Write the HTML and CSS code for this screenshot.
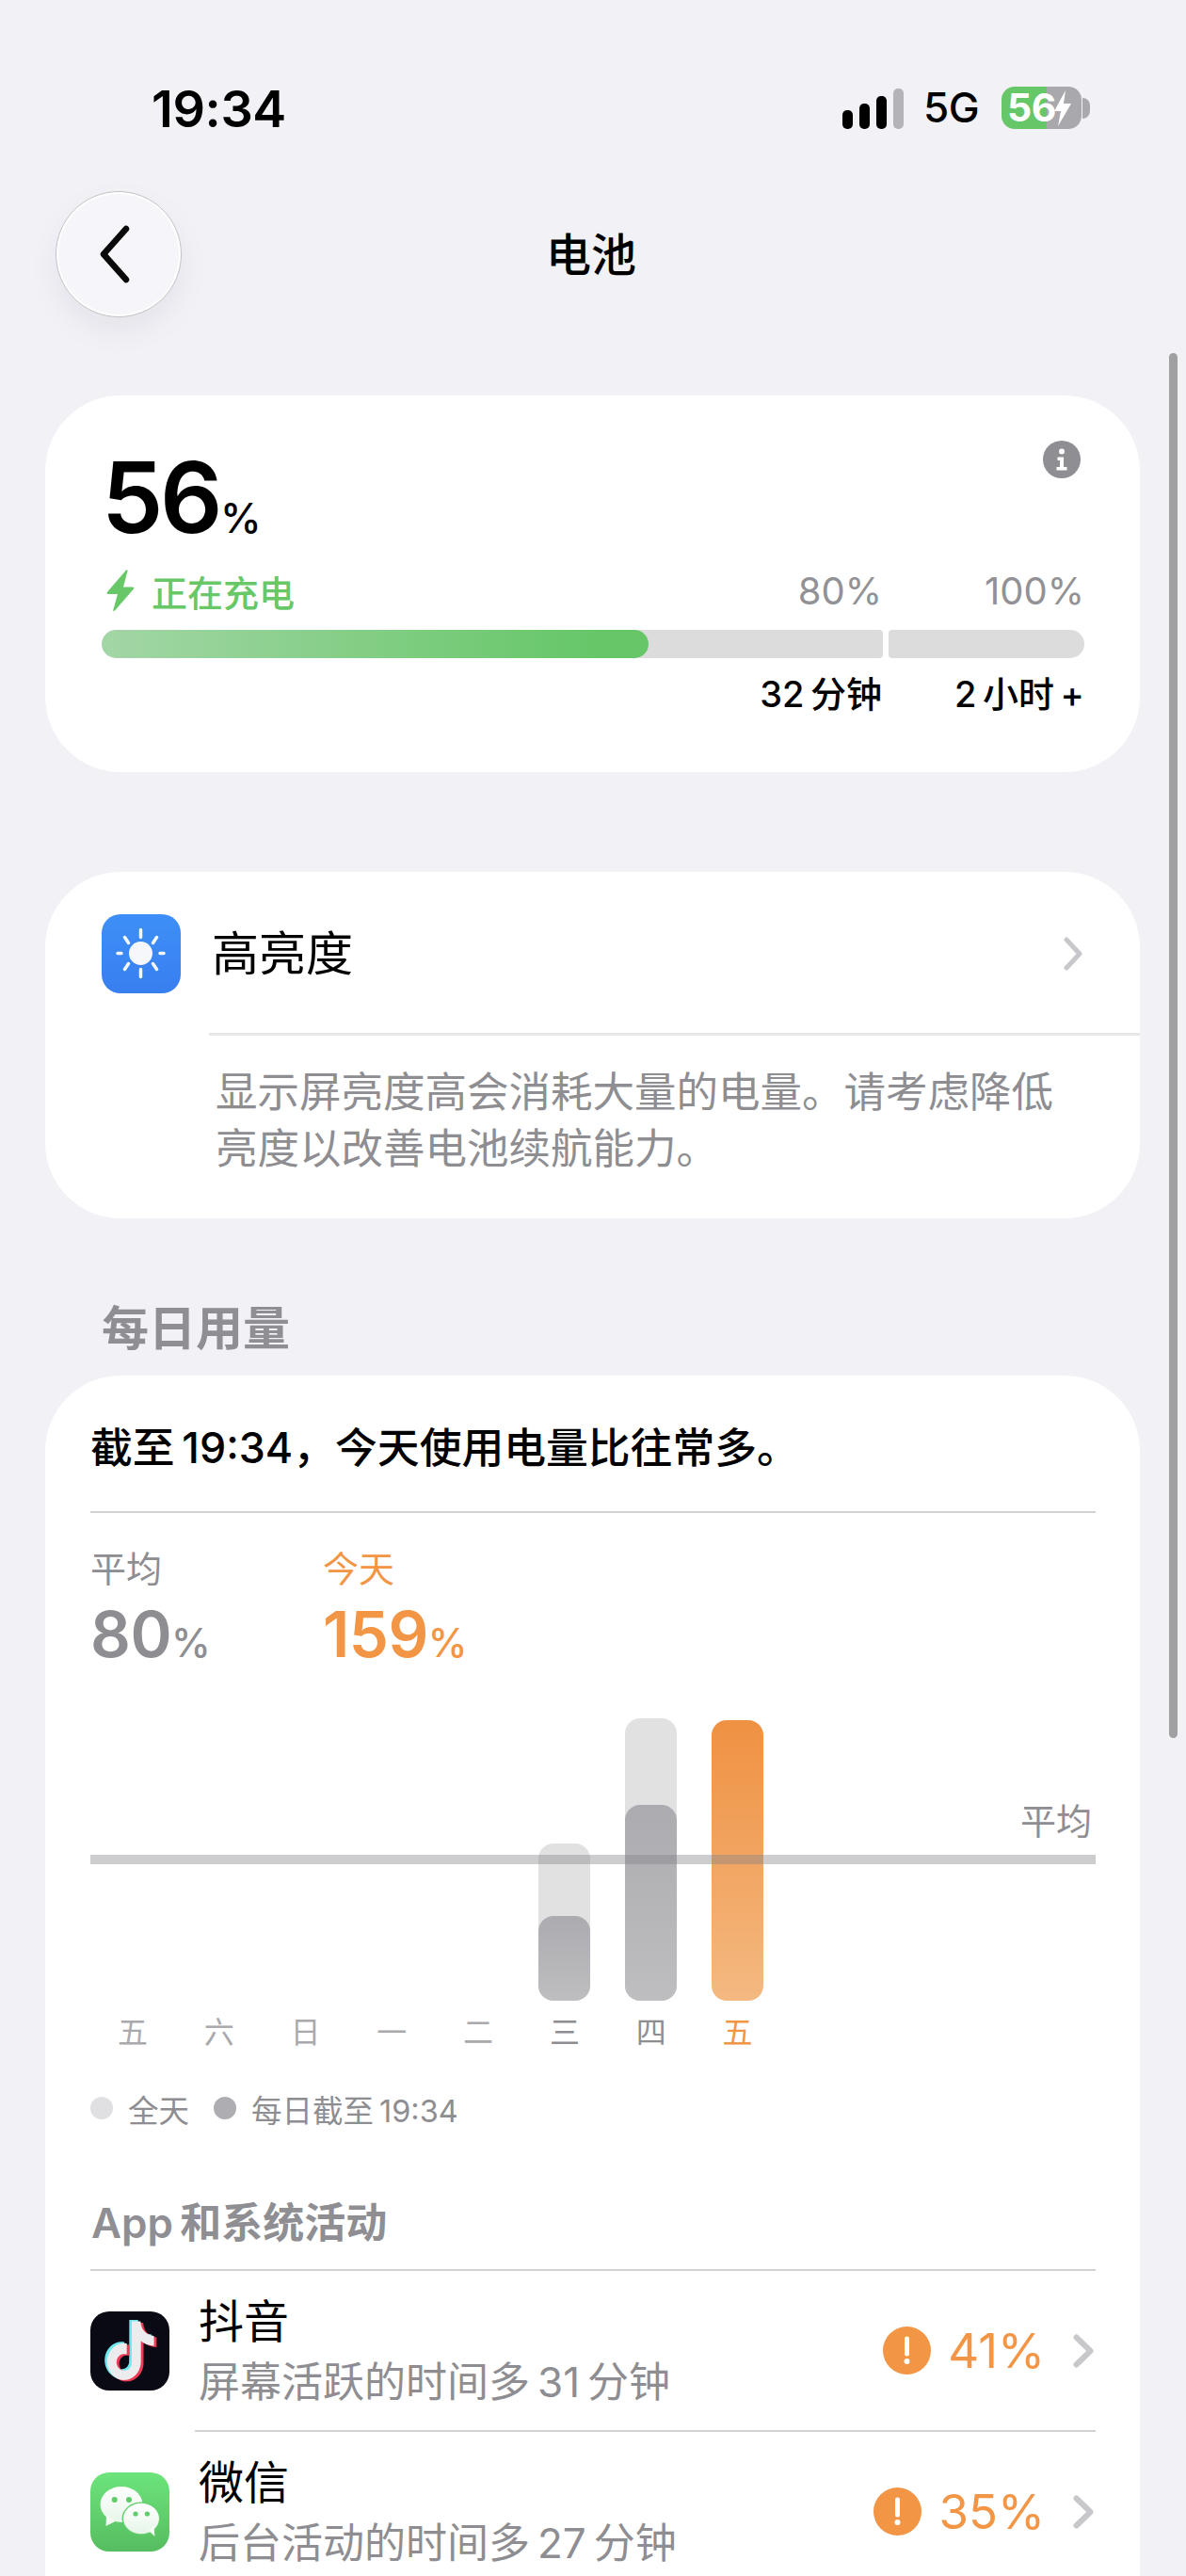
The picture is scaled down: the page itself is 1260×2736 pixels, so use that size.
FILE: index.html
```html
<!DOCTYPE html>
<html lang="zh-CN">
<head>
<meta charset="utf-8">
<title>电池</title>
<link rel="stylesheet" href="styles.css">
</head>
<body>
<div class="screen">
  <header class="status-bar">
    <span class="clock">19:34</span>
    <div class="status-right">
      <div class="signal"><i class="s1"></i><i class="s2"></i><i class="s3"></i><i class="s4"></i></div>
      <span class="net">5G</span>
      <div class="battery">
        <div class="battery-body">
          <span class="battery-level">56</span>
          <svg class="battery-bolt" viewBox="0 0 20 40"><path d="M13 1 1 23h7L5 39 19 15h-8z" fill="#fff"/></svg>
        </div>
        <div class="battery-cap"></div>
      </div>
    </div>
  </header>

  <nav class="nav">
    <button class="back" aria-label="返回">
      <svg viewBox="0 0 40 64" width="40" height="64"><path d="M33 5 9 32l24 27" fill="none" stroke="#0a0a0a" stroke-width="6.500" stroke-linecap="round" stroke-linejoin="round"/></svg>
    </button>
    <h1 class="nav-title">电池</h1>
    <span></span>
  </nav>

  <section class="card charge-card">
    <div class="level-row">
      <div class="level"><span class="level-num">56</span><span class="level-pct">%</span></div>
      <svg class="info" viewBox="0 0 40 40" width="40" height="40">
        <circle cx="20" cy="20" r="20" fill="#8e8e93"/>
        <circle cx="20" cy="11.500" r="3" fill="#fff"/>
        <path d="M15.500 17.500h6.500v10.500h3.500v3.500h-11v-3.500h3.500v-7h-2.500z" fill="#fff"/>
      </svg>
    </div>
    <div class="target-row">
      <div class="charging">
        <svg viewBox="0 0 30 46" width="30" height="46"><path d="M21 1.500c.8-.8 1.800 0 1.500 1L18 19.500h10c1.300 0 1.700 1 1 2L9 44.500c-.8 1-2 .2-1.700-.8L12 27H2c-1.300 0-1.800-1.200-1-2.200z" fill="#68c868"/></svg>
        <span>正在充电</span>
      </div>
      <div class="target t80">80%</div>
      <div class="target t100">100%</div>
    </div>
    <div class="charge-bar">
      <div class="seg seg-main"><div class="seg-fill"></div></div>
      <div class="seg seg-rest"></div>
    </div>
    <div class="eta-row">
      <div class="eta t80">32&thinsp;分钟</div>
      <div class="eta t100">2&thinsp;小时&thinsp;+</div>
    </div>
  </section>

  <section class="card insight-card">
    <div class="insight-head">
      <svg class="rounded-icon" viewBox="0 0 84 84" width="84" height="84">
        <defs><linearGradient id="blue" x1="0" y1="0" x2="0" y2="1"><stop offset="0" stop-color="#3d8ff7"/><stop offset="1" stop-color="#387ff0"/></linearGradient></defs>
        <rect width="84" height="84" rx="20" fill="url(#blue)"/>
        <circle cx="41.500" cy="41.500" r="12.500" fill="#f5f7fa"/>
        <g stroke="#f5f7fa" stroke-width="3.500" stroke-linecap="round">
          <path d="M41.500 16.500v8M41.500 58.500v8M17 41.500h4M62 41.500h4"/>
          <path d="M24.500 24.500l4 6M58.500 24.500l-4 6M24.500 58.500l4-6M58.500 58.500l-4-6"/>
        </g>
      </svg>
      <span class="insight-title">高亮度</span>
      <svg class="chev-thin" viewBox="0 0 22 38" width="22" height="38"><path d="M4 4l14 15L4 34" fill="none" stroke="#c8c8cc" stroke-width="5" stroke-linecap="round" stroke-linejoin="round"/></svg>
    </div>
    <div class="insight-rule"></div>
    <p class="insight-text">显示屏亮度高会消耗大量的电量。请考虑降低亮度以改善电池续航能力。</p>
  </section>

  <h2 class="section-title">每日用量</h2>

  <section class="card usage-card">
    <p class="usage-note">截至&thinsp;19:34，今天使用电量比往常多。</p>
    <div class="rule"></div>
    <div class="stats">
      <div class="stat">
        <div class="stat-label">平均</div>
        <div class="stat-value"><b>80</b><small>%</small></div>
      </div>
      <div class="stat stat-today">
        <div class="stat-label">今天</div>
        <div class="stat-value"><b>159</b><small>%</small></div>
      </div>
    </div>

    <div class="chart">
      <div class="avg-line"></div>
      <div class="avg-label">平均</div>
      <div class="day"><div class="plot"></div><span>五</span></div>
      <div class="day"><div class="plot"></div><span>六</span></div>
      <div class="day"><div class="plot"></div><span>日</span></div>
      <div class="day"><div class="plot"></div><span>一</span></div>
      <div class="day"><div class="plot"></div><span>二</span></div>
      <div class="day day-dark"><div class="plot"><div class="bar bar-wed"><div class="bar-part bar-part-wed"></div></div></div><span>三</span></div>
      <div class="day day-dark"><div class="plot"><div class="bar bar-thu"><div class="bar-part bar-part-thu"></div></div></div><span>四</span></div>
      <div class="day day-today"><div class="plot"><div class="bar bar-fri"></div></div><span>五</span></div>
    </div>

    <div class="legend">
      <i class="dot dot-all"></i><span>全天</span>
      <i class="dot dot-part"></i><span>每日截至&thinsp;19:34</span>
    </div>

    <h3 class="apps-title">App&thinsp;和系统活动</h3>
    <div class="rule"></div>

    <div class="app-row">
      <svg class="app-icon" viewBox="0 0 84 84" width="84" height="84">
        <rect width="84" height="84" rx="20" fill="#0a0a14"/>
        <g transform="translate(11.500 9) scale(2.380 2.600)">
          <path fill="#6fe9ee" d="M12.525.02c1.310-.02 2.610-.01 3.910-.02.08 1.530.63 3.090 1.750 4.170 1.120 1.110 2.700 1.620 4.240 1.790v4.030c-1.440-.05-2.890-.35-4.200-.97-.57-.26-1.100-.59-1.620-.93-.01 2.920.01 5.840-.02 8.750-.08 1.400-.54 2.790-1.350 3.940-1.310 1.920-3.580 3.170-5.910 3.210-1.430.08-2.860-.31-4.080-1.030-2.020-1.190-3.440-3.370-3.650-5.710-.02-.5-.03-1-.01-1.490.18-1.900 1.120-3.720 2.580-4.960 1.660-1.440 3.980-2.130 6.150-1.720.02 1.480-.04 2.960-.04 4.440-.99-.32-2.150-.23-3.020.37-.63.41-1.110 1.040-1.360 1.750-.21.510-.15 1.070-.14 1.610.24 1.640 1.820 3.020 3.500 2.870 1.120-.01 2.190-.66 2.770-1.610.19-.33.4-.67.41-1.060.1-1.790.06-3.570.07-5.360.01-4.030-.01-8.050.02-12.070z"/>
        </g>
        <g transform="translate(17 12) scale(2.380 2.600)">
          <path fill="#ee3a55" d="M12.525.02c1.310-.02 2.610-.01 3.910-.02.08 1.530.63 3.090 1.750 4.170 1.120 1.110 2.700 1.620 4.240 1.790v4.030c-1.440-.05-2.890-.35-4.200-.97-.57-.26-1.100-.59-1.620-.93-.01 2.920.01 5.840-.02 8.750-.08 1.400-.54 2.790-1.350 3.940-1.310 1.920-3.580 3.170-5.910 3.210-1.430.08-2.860-.31-4.080-1.030-2.020-1.190-3.440-3.370-3.650-5.710-.02-.5-.03-1-.01-1.490.18-1.900 1.120-3.720 2.580-4.960 1.660-1.440 3.980-2.130 6.150-1.720.02 1.480-.04 2.960-.04 4.440-.99-.32-2.150-.23-3.020.37-.63.41-1.110 1.040-1.360 1.750-.21.510-.15 1.070-.14 1.610.24 1.640 1.820 3.020 3.500 2.870 1.120-.01 2.190-.66 2.770-1.610.19-.33.4-.67.41-1.060.1-1.790.06-3.570.07-5.360.01-4.030-.01-8.050.02-12.070z"/>
        </g>
        <g transform="translate(14.200 10.500) scale(2.380 2.600)">
          <path fill="#ececee" d="M12.525.02c1.310-.02 2.610-.01 3.910-.02.08 1.530.63 3.090 1.750 4.170 1.120 1.110 2.700 1.620 4.240 1.790v4.030c-1.440-.05-2.890-.35-4.200-.97-.57-.26-1.100-.59-1.620-.93-.01 2.920.01 5.840-.02 8.750-.08 1.400-.54 2.790-1.350 3.940-1.310 1.920-3.580 3.170-5.910 3.210-1.430.08-2.860-.31-4.080-1.030-2.020-1.190-3.440-3.370-3.650-5.710-.02-.5-.03-1-.01-1.490.18-1.900 1.120-3.720 2.580-4.960 1.660-1.440 3.980-2.130 6.150-1.720.02 1.480-.04 2.960-.04 4.440-.99-.32-2.150-.23-3.020.37-.63.41-1.110 1.040-1.360 1.750-.21.510-.15 1.070-.14 1.610.24 1.640 1.820 3.020 3.500 2.870 1.120-.01 2.190-.66 2.770-1.610.19-.33.4-.67.41-1.060.1-1.790.06-3.570.07-5.360.01-4.030-.01-8.050.02-12.070z"/>
        </g>
      </svg>
      <div class="app-text">
        <div class="app-name">抖音</div>
        <div class="app-sub">屏幕活跃的时间多&thinsp;31&thinsp;分钟</div>
      </div>
      <svg class="warn" viewBox="0 0 51 51" width="51" height="51"><circle cx="25.500" cy="25.500" r="25.500" fill="#f29545"/><path d="M25.500 13v16" stroke="#fff" stroke-width="5" stroke-linecap="round"/><circle cx="25.500" cy="37" r="3" fill="#fff"/></svg>
      <span class="app-pct">41%</span>
      <svg class="chev" viewBox="0 0 22 36" width="22" height="36"><path d="M3.500 3.500 18.500 18l-15 14.500" fill="none" stroke="#c8c8cc" stroke-width="6" stroke-linecap="round" stroke-linejoin="round"/></svg>
    </div>
    <div class="rule rule-inset"></div>
    <div class="app-row">
      <svg class="app-icon" viewBox="0 0 84 84" width="84" height="84">
        <defs>
          <linearGradient id="wx" x1="0" y1="0" x2="0" y2="1"><stop offset="0" stop-color="#6de47c"/><stop offset="1" stop-color="#56bd60"/></linearGradient>
          <linearGradient id="wb" x1="0" y1="0" x2="0" y2="1"><stop offset="0" stop-color="#ffffff"/><stop offset="1" stop-color="#e6f6e8"/></linearGradient>
        </defs>
        <rect width="84" height="84" rx="20" fill="url(#wx)"/>
        <ellipse cx="33" cy="34" rx="22.500" ry="19" fill="url(#wb)"/>
        <path d="M17 46l-.5 11 10-5z" fill="url(#wb)"/>
        <ellipse cx="54" cy="49" rx="20.500" ry="17.500" fill="#62d06e"/>
        <ellipse cx="54" cy="49" rx="19" ry="16.300" fill="url(#wb)"/>
        <path d="M62 62l6.500 6-1-11z" fill="url(#wb)"/>
        <g fill="#5fcb6b"><circle cx="25.700" cy="29" r="3"/><circle cx="41" cy="29" r="3"/><circle cx="48" cy="44" r="2.600"/><circle cx="60.400" cy="44" r="2.600"/></g>
      </svg>
      <div class="app-text">
        <div class="app-name">微信</div>
        <div class="app-sub">后台活动的时间多&thinsp;27&thinsp;分钟</div>
      </div>
      <svg class="warn" viewBox="0 0 51 51" width="51" height="51"><circle cx="25.500" cy="25.500" r="25.500" fill="#f29545"/><path d="M25.500 13v16" stroke="#fff" stroke-width="5" stroke-linecap="round"/><circle cx="25.500" cy="37" r="3" fill="#fff"/></svg>
      <span class="app-pct">35%</span>
      <svg class="chev" viewBox="0 0 22 36" width="22" height="36"><path d="M3.500 3.500 18.500 18l-15 14.500" fill="none" stroke="#c8c8cc" stroke-width="6" stroke-linecap="round" stroke-linejoin="round"/></svg>
    </div>
  </section>

  <div class="scrollbar"></div>
</div>
</body>
</html>
```

FILE: styles.css
```css
* { box-sizing: border-box; }

html, body { margin: 0; padding: 0; }

body {
  background: #f1f1f6;
  color: #000;
  font-family: "Inter", "Noto Sans CJK SC", sans-serif;
}

.screen {
  position: relative;
  width: 1260px;
  height: 2736px;
  overflow: hidden;
}

/* status bar */
.status-bar {
  display: flex;
  justify-content: space-between;
  align-items: center;
  height: 45px;
  margin-top: 92px;
  padding: 0 102px 0 161px;
}

.clock {
  padding-top: 2px;
  font-size: 54px;
  font-weight: 600;
  line-height: 45px;
  letter-spacing: -0.4px;
}

.status-right {
  display: flex;
  align-items: flex-end;
}

.signal {
  display: flex;
  align-items: flex-end;
  gap: 7px;
  height: 43px;
}

.signal i {
  display: block;
  width: 11px;
  border-radius: 5px;
  background: #000;
}

.signal .s1 { height: 20px; }
.signal .s2 { height: 27px; }
.signal .s3 { height: 35px; }
.signal .s4 { height: 43px; background: #b4b4b8; }

.net {
  margin-left: 21px;
  width: 83px;
  font-size: 44px;
  font-weight: 500;
  line-height: 45px;
  letter-spacing: -0.5px;
}

.battery {
  display: flex;
  align-items: center;
}

.battery-body {
  display: flex;
  align-items: center;
  width: 85px;
  height: 45px;
  padding-left: 6px;
  border-radius: 14px;
  background: linear-gradient(90deg, #66c768 0 48px, #a8a8ad 48px);
}

.battery-level {
  width: 47px;
  color: #fff;
  font-size: 41px;
  font-weight: 700;
  line-height: 45px;
  letter-spacing: -0.5px;
}

.battery-bolt {
  width: 24px;
  height: 40px;
}

.battery-cap {
  width: 8px;
  height: 22px;
  margin-left: 1px;
  border-radius: 0 8px 8px 0;
  background: #a8a8ad;
}

/* navigation */
.nav {
  display: grid;
  grid-template-columns: 1fr auto 1fr;
  align-items: center;
  margin-top: 66px;
  padding: 0 59px;
}

.back {
  display: flex;
  align-items: center;
  justify-content: center;
  width: 134px;
  height: 134px;
  padding: 0 10px 0 0;
  border: 1px solid #c4c4c8;
  border-radius: 50%;
  background: #f6f6fa;
  box-shadow: inset 0 0 0 2px #fff, 0 14px 28px rgba(120, 120, 140, 0.1);
}

.nav-title {
  margin: 2px 0 0 -4px;
  font-size: 48px;
  font-weight: 500;
  line-height: 60px;
}

/* cards */
.card {
  width: 1163px;
  margin-left: 48px;
  border-radius: 80px;
  background: #fff;
}

.charge-card {
  height: 400px;
  margin-top: 83px;
  padding: 48px 59px 0 60px;
}

.level-row {
  display: flex;
  justify-content: space-between;
  align-items: flex-start;
  height: 120px;
}

.level {
  display: flex;
  align-items: baseline;
  line-height: 120px;
}

.level-num {
  font-size: 104px;
  font-weight: 600;
  letter-spacing: -3.5px;
}

.level-pct {
  margin-left: 1px;
  font-size: 44px;
  font-weight: 500;
  letter-spacing: -1px;
}

.info {
  margin-right: 4px;
}

.target-row,
.eta-row {
  display: flex;
  align-items: center;
}

.target-row {
  height: 50px;
  margin-top: 14px;
}

.charging {
  display: flex;
  align-items: center;
  gap: 18px;
  flex: 1;
  padding-left: 5px;
  color: #68c868;
  font-size: 38px;
  font-weight: 500;
}

.target {
  color: #929296;
  font-size: 40px;
  font-weight: 400;
  text-align: right;
}

.t80 { width: 198px; }
.t100 { width: 215px; }

.charge-bar {
  display: flex;
  gap: 6px;
  height: 30px;
  margin-top: 17px;
}

.seg {
  height: 30px;
  background: #dcdcdc;
}

.seg-main {
  width: 830px;
  border-radius: 15px 4px 4px 15px;
  overflow: hidden;
}

.seg-rest {
  flex: 1;
  border-radius: 4px 15px 15px 4px;
}

.seg-fill {
  width: 581px;
  height: 30px;
  border-radius: 15px;
  background: linear-gradient(90deg, #a3d6a6, #66c768 90%);
}

.eta-row {
  justify-content: flex-end;
  height: 50px;
  margin-top: 10px;
}

.eta {
  font-size: 38px;
  font-weight: 500;
  text-align: right;
}

/* high brightness card */
.insight-card {
  height: 368px;
  margin-top: 106px;
  padding-top: 45px;
}

.insight-head {
  display: flex;
  align-items: center;
  height: 84px;
  padding: 0 60px;
}

.rounded-icon {
  flex: none;
}

.insight-title {
  flex: 1;
  margin-left: 33px;
  font-size: 50px;
  font-weight: 400;
  line-height: 84px;
}

.insight-rule {
  height: 3px;
  margin: 42px 0 0 174px;
  background: #e8e8e8;
}

.insight-text {
  margin: 30px 60px 0 181px;
  color: #8e8e92;
  font-size: 44.5px;
  line-height: 60px;
}

/* daily usage */
.section-title {
  height: 70px;
  margin: 82px 0 0 108px;
  color: #8e8e93;
  font-size: 50px;
  font-weight: 600;
  line-height: 70px;
}

.usage-card {
  height: 1400px;
  margin-top: 15px;
  padding: 47px 47px 0 48px;
  border-radius: 80px 80px 0 0;
}

.usage-note {
  height: 60px;
  margin: 0;
  font-size: 44.8px;
  font-weight: 500;
  line-height: 60px;
}

.rule {
  height: 2px;
  background: #d2d2d5;
}

.usage-note + .rule {
  margin-top: 37px;
}

.rule-inset {
  margin-left: 111px;
}

.stats {
  display: flex;
  margin-top: 34px;
}

.stat {
  width: 247px;
  color: #8e8e92;
}

.stat-label {
  font-size: 38px;
  line-height: 50px;
}

.stat-value {
  margin-top: 7px;
  line-height: 76px;
}

.stat-value b {
  font-size: 67px;
  font-weight: 600;
  letter-spacing: -0.5px;
}

.stat-value small {
  font-size: 42px;
  font-weight: 500;
  letter-spacing: -1px;
}

.stat-today {
  color: #f29545;
}

/* chart */
.chart {
  position: relative;
  display: grid;
  grid-template-columns: repeat(8, 91.8px);
  margin: 33px 0 0 -1px;
}

.avg-line {
  position: absolute;
  top: 145px;
  left: 1px;
  width: 1068px;
  height: 10px;
  background: rgba(130, 130, 135, 0.4);
}

.avg-label {
  position: absolute;
  top: 84px;
  left: 989px;
  color: #8e8e92;
  font-size: 38px;
  line-height: 50px;
}

.day {
  display: flex;
  flex-direction: column;
  align-items: center;
  color: #aaaaae;
  font-size: 32px;
  line-height: 44px;
}

.day-dark { color: #8e8e92; }
.day-today { color: #f29545; }

.plot {
  display: flex;
  align-items: flex-end;
  height: 300px;
  margin-bottom: 12px;
}

.bar {
  display: flex;
  align-items: flex-end;
  width: 55px;
  border-radius: 16px;
  background: #e1e1e2;
}

.bar-wed { height: 167px; }
.bar-thu { height: 300px; }

.bar-part {
  width: 55px;
  border-radius: 16px;
  background: linear-gradient(180deg, #acacb0, #bebec1);
}

.bar-part-wed { height: 90px; }
.bar-part-thu { height: 208px; }

.bar-fri {
  height: 298px;
  background: linear-gradient(180deg, #ef9142, #f4b981);
}

/* legend */
.legend {
  display: flex;
  align-items: center;
  height: 44px;
  margin-top: 36px;
  color: #8e8e92;
  font-size: 32.5px;
}

.dot {
  width: 24px;
  height: 24px;
  margin-right: 16px;
  border-radius: 50%;
}

.dot-all { background: #e0e0e2; }
.dot-part { margin-left: 26px; background: #aeaeb2; }

/* app list */
.apps-title {
  height: 60px;
  margin: 70px 0 0 1px;
  color: #8e8e93;
  font-size: 44px;
  font-weight: 600;
  line-height: 60px;
}

.apps-title + .rule {
  margin-top: 19px;
}

.app-row {
  display: flex;
  align-items: center;
  height: 169px;
  padding-right: 2px;
}

.app-icon {
  flex: none;
}

.app-text {
  flex: 1;
  margin-left: 31px;
}

.app-name {
  font-size: 48px;
  line-height: 62px;
}

.app-sub {
  margin-top: 5px;
  color: #8e8e92;
  font-size: 44px;
  line-height: 56px;
}

.warn {
  flex: none;
  margin-right: 18px;
}

.app-pct {
  color: #f29545;
  font-size: 51px;
  line-height: 60px;
}

.chev {
  flex: none;
  margin-left: 30px;
}

/* overlay scroll indicator */
.scrollbar {
  position: absolute;
  top: 375px;
  left: 1242px;
  width: 9px;
  height: 1471px;
  border-radius: 5px;
  background: #a0a0a3;
}
```
